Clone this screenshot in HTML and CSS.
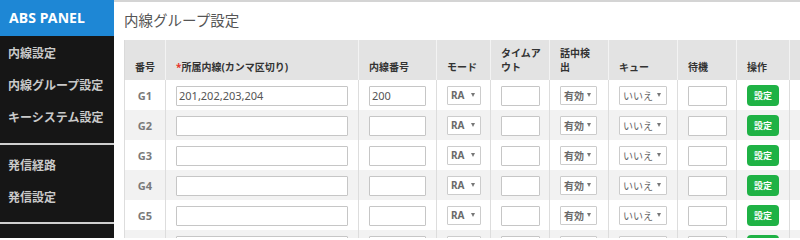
FILE: index.html
```html
<!DOCTYPE html>
<html lang="ja">
<head>
<meta charset="utf-8">
<title>内線グループ設定</title>
<link rel="stylesheet" href="styles.css">
</head>
<body>
<div class="app">
  <aside class="sidebar">
    <div class="brand">ABS PANEL</div>
    <nav class="group g1">
      <a class="item">内線設定</a>
      <a class="item">内線グループ設定</a>
      <a class="item">キーシステム設定</a>
    </nav>
    <nav class="group g2">
      <a class="item">発信経路</a>
      <a class="item">発信設定</a>
    </nav>
    <div class="group g3"></div>
  </aside>
  <main class="main">
    <h1 class="title">内線グループ設定</h1>
    <div class="grid">
      <div class="row head">
        <div class="cell">番号</div>
        <div class="cell"><span class="req">*</span>所属内線(カンマ区切り)</div>
        <div class="cell">内線番号</div>
        <div class="cell">モード</div>
        <div class="cell">タイムア<br>ウト</div>
        <div class="cell">話中検<br>出</div>
        <div class="cell">キュー</div>
        <div class="cell">待機</div>
        <div class="cell">操作</div>
        <div class="cell"></div>
      </div>
      <div class="row">
        <div class="cell num">G1</div>
        <div class="cell"><input class="in w-members" value="201,202,203,204"></div>
        <div class="cell"><input class="in w-ext" value="200"></div>
        <div class="cell"><span class="sel w-mode">RA<i class="caret"></i></span></div>
        <div class="cell"><input class="in w-small"></div>
        <div class="cell"><span class="sel w-busy">有効<i class="caret"></i></span></div>
        <div class="cell"><span class="sel w-queue">いいえ<i class="caret"></i></span></div>
        <div class="cell"><input class="in w-small"></div>
        <div class="cell"><button class="btn">設定</button></div>
        <div class="cell"></div>
      </div>
      <div class="row alt">
        <div class="cell num">G2</div>
        <div class="cell"><input class="in w-members"></div>
        <div class="cell"><input class="in w-ext"></div>
        <div class="cell"><span class="sel w-mode">RA<i class="caret"></i></span></div>
        <div class="cell"><input class="in w-small"></div>
        <div class="cell"><span class="sel w-busy">有効<i class="caret"></i></span></div>
        <div class="cell"><span class="sel w-queue">いいえ<i class="caret"></i></span></div>
        <div class="cell"><input class="in w-small"></div>
        <div class="cell"><button class="btn">設定</button></div>
        <div class="cell"></div>
      </div>
      <div class="row">
        <div class="cell num">G3</div>
        <div class="cell"><input class="in w-members"></div>
        <div class="cell"><input class="in w-ext"></div>
        <div class="cell"><span class="sel w-mode">RA<i class="caret"></i></span></div>
        <div class="cell"><input class="in w-small"></div>
        <div class="cell"><span class="sel w-busy">有効<i class="caret"></i></span></div>
        <div class="cell"><span class="sel w-queue">いいえ<i class="caret"></i></span></div>
        <div class="cell"><input class="in w-small"></div>
        <div class="cell"><button class="btn">設定</button></div>
        <div class="cell"></div>
      </div>
      <div class="row alt">
        <div class="cell num">G4</div>
        <div class="cell"><input class="in w-members"></div>
        <div class="cell"><input class="in w-ext"></div>
        <div class="cell"><span class="sel w-mode">RA<i class="caret"></i></span></div>
        <div class="cell"><input class="in w-small"></div>
        <div class="cell"><span class="sel w-busy">有効<i class="caret"></i></span></div>
        <div class="cell"><span class="sel w-queue">いいえ<i class="caret"></i></span></div>
        <div class="cell"><input class="in w-small"></div>
        <div class="cell"><button class="btn">設定</button></div>
        <div class="cell"></div>
      </div>
      <div class="row">
        <div class="cell num">G5</div>
        <div class="cell"><input class="in w-members"></div>
        <div class="cell"><input class="in w-ext"></div>
        <div class="cell"><span class="sel w-mode">RA<i class="caret"></i></span></div>
        <div class="cell"><input class="in w-small"></div>
        <div class="cell"><span class="sel w-busy">有効<i class="caret"></i></span></div>
        <div class="cell"><span class="sel w-queue">いいえ<i class="caret"></i></span></div>
        <div class="cell"><input class="in w-small"></div>
        <div class="cell"><button class="btn">設定</button></div>
        <div class="cell"></div>
      </div>
      <div class="row alt">
        <div class="cell num">G6</div>
        <div class="cell"><input class="in w-members"></div>
        <div class="cell"><input class="in w-ext"></div>
        <div class="cell"><span class="sel w-mode">RA<i class="caret"></i></span></div>
        <div class="cell"><input class="in w-small"></div>
        <div class="cell"><span class="sel w-busy">有効<i class="caret"></i></span></div>
        <div class="cell"><span class="sel w-queue">いいえ<i class="caret"></i></span></div>
        <div class="cell"><input class="in w-small"></div>
        <div class="cell"><button class="btn">設定</button></div>
        <div class="cell"></div>
      </div>
    </div>
  </main>
</div>
</body>
</html>
```

FILE: styles.css
```css
* { box-sizing: border-box; }

html, body {
  margin: 0;
  padding: 0;
  height: 100%;
  overflow: hidden;
  background: #ffffff;
  font-family: "Noto Sans", "Noto Sans CJK JP", sans-serif;
}

.app {
  display: flex;
  height: 238px;
  width: 800px;
  overflow: hidden;
}

/* Sidebar */
.sidebar {
  flex: 0 0 114px;
  width: 114px;
  background: #161616;
  display: flex;
  flex-direction: column;
}

.brand {
  height: 36px;
  background: #1e87d5;
  color: #ffffff;
  font-weight: 700;
  font-size: 14px;
  line-height: 36px;
  padding-left: 9px;
  letter-spacing: 0.1px;
}

.group {
  display: flex;
  flex-direction: column;
}

.g1 { padding: 2px 0 9px; }
.g2 { padding: 5px 0 8px; border-top: 2px solid #cfcfcf; }
.g3 { border-top: 2px solid #cfcfcf; flex: 1; }

.item {
  display: block;
  height: 32px;
  line-height: 32px;
  padding-left: 8px;
  color: #c9c9c9;
  font-size: 12px;
  font-weight: 700;
  white-space: nowrap;
  text-decoration: none;
}

/* Main */
.main {
  flex: 1;
  min-width: 0;
  border-top: 2px solid #d4d4d4;
  padding-left: 10px;
  overflow: hidden;
}

.title {
  margin: 0;
  padding: 8px 0 10px;
  font-size: 14.5px;
  line-height: 20px;
  font-weight: 400;
  color: #555555;
  white-space: nowrap;
}

.grid {
  width: 760px;
}

.row {
  display: grid;
  grid-template-columns: 41px 193px 78px 54px 59px 59px 69px 59px 53px 95px;
  height: 30px;
  background: #ffffff;
}

.row.alt { background: #f2f2f2; }

.cell {
  border-left: 1px solid #dddddd;
  padding-left: 10px;
  display: flex;
  align-items: center;
  min-width: 0;
  white-space: nowrap;
}

.row.head {
  height: 40px;
  background: #e3e3e3;
}

.row.head .cell {
  border-left-color: #f3f3f3;
  align-items: flex-end;
  padding-bottom: 6px;
  font-size: 10px;
  line-height: 14px;
  font-weight: 700;
  color: #333333;
}

.row.head .cell:first-child { border-left-color: #dadada; }

.req { color: #e8342a; }

.num {
  justify-content: center;
  padding-left: 0;
  font-size: 11px;
  font-weight: 700;
  color: #7a7a7a;
}

.in {
  height: 20px;
  margin-top: 1px;
  border: 1px solid #c6c6c6;
  border-radius: 1px;
  background: #ffffff;
  padding: 0 2px;
  font-family: inherit;
  font-size: 11px;
  color: #555555;
  outline: none;
}

.w-members { width: 172px; }
.w-ext { width: 57px; }
.w-small { width: 39px; }

.sel {
  display: inline-flex;
  align-items: center;
  justify-content: space-between;
  height: 19px;
  border: 1px solid #cccccc;
  border-radius: 1px;
  background: #ffffff;
  padding: 0 5px 0 3px;
  font-size: 10px;
  font-weight: 700;
  color: #6a6a6a;
}

.w-mode { width: 34px; }
.w-busy { width: 37px; }
.w-queue { width: 48px; font-weight: 400; color: #666666; }

.caret {
  width: 0;
  height: 0;
  border-left: 2.5px solid transparent;
  border-right: 2.5px solid transparent;
  border-top: 4px solid #777777;
}

.btn {
  width: 32px;
  height: 21px;
  border: 0;
  border-radius: 4px;
  background: #1fb245;
  color: #ffffff;
  font-family: inherit;
  font-size: 9px;
  font-weight: 700;
  padding: 0;
  margin-top: 1px;
}
```
